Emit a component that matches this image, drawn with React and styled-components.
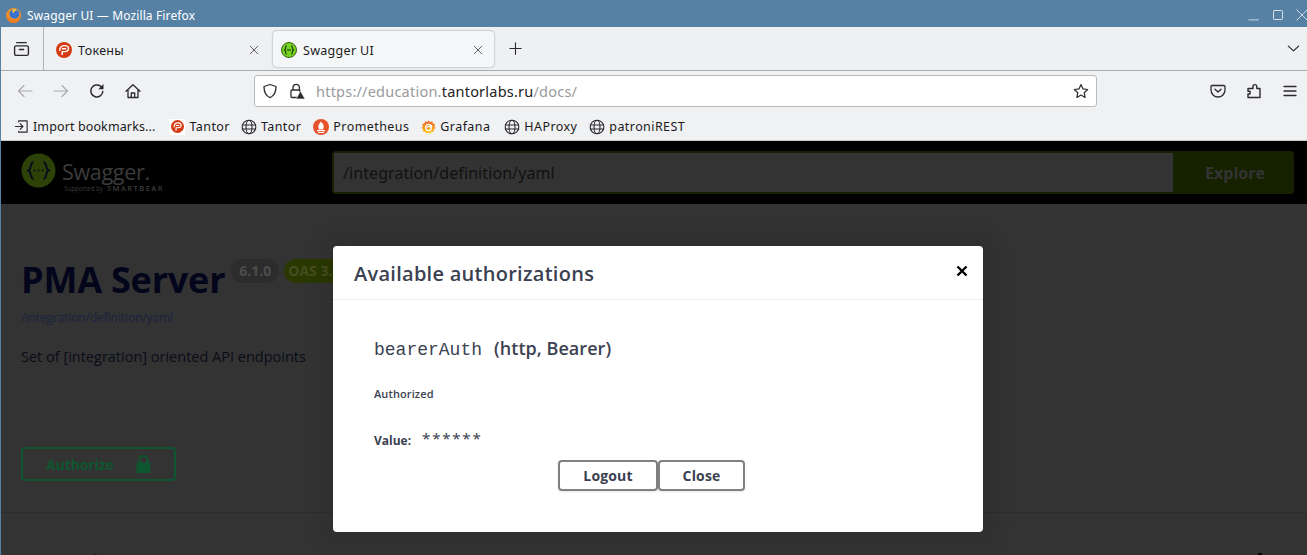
import React from 'react';
import styled, { createGlobalStyle } from 'styled-components';

const Global = createGlobalStyle`
  html, body { margin: 0; padding: 0; width: 1307px; height: 555px; overflow: hidden; background: #5681a5; }
  #root { width: 1307px; height: 555px; overflow: hidden; }
  * { box-sizing: border-box; }
`;

const Window = styled.div`
  width: 1307px; height: 555px; display: flex; flex-direction: column; overflow: hidden;
  font-family: "Noto Sans", sans-serif; background: #5681a5; padding-left: 1px;
`;
const TitleBar = styled.div`
  height: 27px; flex: none; display: flex; align-items: center; padding: 3px 0 0 5px; gap: 5px;
  color: #fff; font-size: 12px; margin-left: -1px; background: #5681a5;
`;
const TitleText = styled.span`flex: 1; letter-spacing: .13px;`;
const WinButtons = styled.div`display: flex; gap: 12px; align-items: center; margin-right: -1px;`;
const TabBar = styled.div`
  height: 44px; flex: none; display: flex; align-items: stretch; background: #eff0f2;
  border-bottom: 1px solid #a8a9ab; color: #1b1b1d;
`;
const TabLead = styled.div`
  width: 43px; display: flex; align-items: center; justify-content: center; border-right: 1px solid #b0b1b3; padding-right: 1px;
`;
const Tab = styled.div`
  width: ${p => p.$w}px; height: 36px; align-self: center; margin-top: 1px; padding-top: 2px; display: flex; align-items: center;
  padding-left: ${p => p.$active ? 8 : 12}px; padding-right: ${p => p.$active ? 10 : 13}px; gap: 6px; font-size: 12.5px;
  ${p => p.$active && 'background:#f5f6f7;border-radius:4px;box-shadow:0 0 2px rgba(0,0,0,.45);'}
`;
const TabLabel = styled.span`flex: 1; letter-spacing: .3px;`;
const NewTab = styled.div`width: 43px; display: flex; align-items: center; justify-content: center;`;
const TabSpacer = styled.div`flex: 1;`;
const TabMenu = styled.div`width: 28px; display: flex; align-items: center; justify-content: center;`;
const NavBar = styled.div`
  height: 40px; flex: none; display: flex; align-items: center; background: #f0f1f3; padding-left: 16px;
`;
const NavIcons = styled.div`display: flex; gap: 20px; align-items: center; width: 238px;`;
const UrlBox = styled.div`
  width: 843px; height: 32px; background: #fff; border: 1px solid #b9babb; border-radius: 3px;
  display: flex; align-items: center; padding: 0 7px; gap: 7px; font-size: 14.5px; color: #9a9a9c;
  margin-left: -1px;
`;
const LockWrap = styled.span`display: flex; margin-left: 4px;`;
const UrlText = styled.div`flex: 1; padding-left: 4px; letter-spacing: .22px; white-space: pre;`;
const Host = styled.span`color: #222;`;
const NavRight = styled.div`display: flex; margin-left: 113px; gap: 20px; align-items: center;`;
const Bookmarks = styled.div`
  height: 30px; flex: none; display: flex; align-items: center; background: #f0f1f3; padding: 2px 0 0 13px;
  font-size: 12.5px; color: #1a1a1c;
  border-bottom: 1px solid #c8c8c8;
`;
const Bookmark = styled.div`display: flex; align-items: center; gap: 4px; margin-right: ${p => p.$mr ?? 12}px; letter-spacing: ${p => p.$ls ?? .42}px; white-space: nowrap;`;
const FaviconBox = styled.span`width: 16px; height: 16px; background: #fff; display: flex; align-items: center; justify-content: center;`;
const Page = styled.div`flex: 1; position: relative; background: #333; font-family: "Open Sans", sans-serif; overflow: hidden;`;
const Header = styled.div`
  height: 63px; background: #000; display: flex; align-items: center; padding-left: 20px;
`;
const Logo = styled.div`width: 311px; display: flex; gap: 6px; align-items: center;`;
const LogoMark = styled.svg`margin-top: -4px; flex: none;`;
const LogoText = styled.div`display: flex; flex-direction: column; color: #3c3c3c; margin-top: 7px;`;
const LogoName = styled.div`font-size: 21.5px; line-height: 24px; letter-spacing: -.3px; font-weight: 400;`;
const LogoSub = styled.div`font-size: 6.2px; line-height: 8px; display: flex; gap: 4px; align-items: baseline; white-space: nowrap; padding-left: 2px;`;
const LogoBear = styled.span`font-size: 7.5px; letter-spacing: 1.45px; font-weight: 600;`;
const Explore = styled.div`
  width: 962px; height: 43px; display: flex; border: 2px solid #162100; border-radius: 4px; background: #162100;
`;
const ExploreInput = styled.div`
  width: 839px; background: #333; color: #111; font-size: 16px; letter-spacing: .08px; display: flex; align-items: center; padding-left: 9px; font-family: "Noto Sans", sans-serif;
`;
const ExploreBtn = styled.div`
  flex: 1; color: #333; font-weight: 700; font-size: 16px; display: flex; align-items: center; justify-content: center; padding-left: 5px;
`;
const Info = styled.div`padding: 52px 0 0 20px;`;
const TitleRow = styled.div`display: flex; align-items: flex-start; gap: 6px;`;
const H1 = styled.div`color: #03051a; font-size: 36px; font-weight: 700; line-height: 48px; letter-spacing: -.2px;`;
const Badge = styled.div`
  height: 24px; border-radius: 12px; padding: 0 ${p => p.$pad}px; font-size: 14px; font-weight: 700; line-height: 24px;
  color: ${p => p.$c}; background: ${p => p.$bg}; margin-top: 3px; white-space: nowrap;
`;
const Badges = styled.div`display: flex; gap: 5px;`;
const BaseUrl = styled.div`font-size: 12px; color: #1a2240; line-height: 16px; margin-top: 6px; letter-spacing: -.1px;`;
const Desc = styled.div`font-size: 14.5px; color: #0a0c18; line-height: 20px; margin-top: 21px;`;
const AuthWrap = styled.div`padding: 80px 0 0 20px;`;
const AuthBtn = styled.div`
  width: 155px; height: 34px; border: 2px solid #0d5630; border-radius: 4px; display: flex; align-items: center;
  padding-left: 23px; gap: 22px; color: #0d5630; font-weight: 700; font-size: 14px; letter-spacing: -.1px;
`;
const Divider = styled.div`height: 1px; background: #2d2d2d; margin-top: 31px;`;
const Section = styled.div`
  padding: 33px 37px 0 34px; color: #03051a; font-size: 23px; font-weight: 700; line-height: 30px;
  display: flex; justify-content: space-between; align-items: flex-start;
`;
const Chevron = styled.svg`margin-top: 7px;`;
const Modal = styled.div`
  position: absolute; left: 332px; top: 105px; width: 650px; height: 286px; background: #fff; border-radius: 4px;
  box-shadow: 0 0 20px 10px rgba(20,20,20,.1); display: flex; flex-direction: column; color: #3b4151;
`;
const ModalHead = styled.div`
  height: 54px; flex: none; border-bottom: 1px solid #ebebeb; display: flex; align-items: center; padding: 0 11px 0 21px;
`;
const ModalTitle = styled.div`flex: 1; font-size: 20px; font-weight: 600; letter-spacing: .27px; margin-top: 1px;`;
const CloseX = styled.svg`margin-top: -3px;`;
const ModalBody = styled.div`padding: 36px 54px 0 41px; display: flex; flex-direction: column;`;
const Scheme = styled.div`display: flex; align-items: baseline; font-size: 18px; font-weight: 600; line-height: 24px; gap: 12px; letter-spacing: .05px;`;
const Mono = styled.span`font-family: "Liberation Mono", monospace; font-weight: 400; font-size: 18px; letter-spacing: 0;`;
const Small = styled.div`font-size: 11px; font-weight: 600; line-height: 14px; margin-top: 25px; letter-spacing: .1px;`;
const ValueRow = styled.div`display: flex; align-items: flex-start; font-size: 12px; font-weight: 700; margin-top: 32px; height: 20px; line-height: 16px; gap: 11px;`;
const Mask = styled.span`font-family: "Noto Sans", sans-serif; font-weight: 400; font-size: 15px; letter-spacing: 1.8px; margin-top: -5px; line-height: 20px;`;
const Actions = styled.div`display: flex; justify-content: center; margin-top: 7px;`;
const ModalBtn = styled.div`
  width: ${p => p.$w}px; height: 31px; border: 2px solid #808080; border-radius: 4px; display: flex; align-items: center; justify-content: center;
  font-size: 14px; font-weight: 700; color: #3b4151; box-shadow: 0 1px 2px rgba(0,0,0,.1); letter-spacing: .15px;
`;

const I = ({ s = 16, c = '#2b2b2f', w = 1.3, children }) => (
  <svg width={s} height={s} viewBox="0 0 16 16" fill="none" stroke={c} strokeWidth={w} strokeLinecap="round" strokeLinejoin="round">{children}</svg>
);
const Globe = () => (
  <I s={16} w={1.1}>
    <circle cx="8" cy="8" r="6.8" />
    <ellipse cx="8" cy="8" rx="3" ry="6.8" />
    <path d="M1.2 6h13.6M1.2 10h13.6" />
  </I>
);
const TantorMark = ({ s = 16 }) => (
  <svg width={s} height={s} viewBox="0 0 16 16">
    <circle cx="8" cy="8" r="8" fill="#d63a12" />
    <path d="M3.800 8.400C3.800 5.400 5.900 3.600 8.700 3.600c2.300 0 3.800 1.300 3.800 3 0 1.900-1.600 3-3.700 3H6.300M6.400 6.700h3.300M6.200 9.600v3" fill="none" stroke="#fff" strokeWidth="1.4" strokeLinecap="round" />
  </svg>
);
const SwaggerMark = () => (
  <svg width="16" height="16" viewBox="0 0 16 16">
    <circle cx="8" cy="8" r="7.500" fill="#74d420" stroke="#3d5f1a" strokeWidth="1" />
    <path d="M5.600 3.600C4 4 5.400 7 3.600 8c1.800 1 .4 4 2 4.400M10.400 3.600c1.600.4.2 3.400 2 4.400-1.800 1-.4 4-2 4.400M6 8h4" fill="none" stroke="#1f2d12" strokeWidth="1.100" />
  </svg>
);
const Firefox = () => (
  <svg width="17" height="17" viewBox="0 0 17 17">
    <circle cx="8.500" cy="8.500" r="7.500" fill="#f0912a" />
    <circle cx="9.400" cy="6.900" r="4.900" fill="#3a72cf" />
    <path d="M1.500 5.500c.6 5.400 5 8.700 9.500 7.500 2.200-.6 3.900-2.400 4.500-4.800.6 3.800-2.600 7.900-7 7.900C4.200 16.100.9 12 1.500 5.500z" fill="#ec7a22" />
    <path d="M7 2.800c2.200-1.300 4.300-.8 5.500.8-1.300-.4-2.100-.2-2.500.5L8 6.500z" fill="#f7c53c" />
  </svg>
);

export default function App() {
  return (
    <Window>
      <Global />
      <TitleBar>
        <Firefox />
        <TitleText>Swagger UI — Mozilla Firefox</TitleText>
        <WinButtons>
          <I s={12} c="#e9eef3" w={1}><path d="M1 14.500h13" /></I>
          <I s={12} c="#e9eef3" w={1.200}><rect x="2" y="2" width="12" height="12" rx="1.200" /></I>
          <I s={12} c="#e9eef3" w={1.100}><path d="M1 1l14 14M15 1L1 15" /></I>
        </WinButtons>
      </TitleBar>
      <TabBar>
        <TabLead>
          <I s={17}><rect x="1.500" y="5.500" width="13" height="9" rx="1.500" /><path d="M3.500 2.500h9M6 9h4" /></I>
        </TabLead>
        <Tab $w={229}>
          <TantorMark />
          <TabLabel>Токены</TabLabel>
          <I s={12} w={1}><path d="M3 3l10 10M13 3L3 13" /></I>
        </Tab>
        <Tab $w={221} $active>
          <SwaggerMark />
          <TabLabel>Swagger UI</TabLabel>
          <I s={12} w={1}><path d="M3 3l10 10M13 3L3 13" /></I>
        </Tab>
        <NewTab><I s={15} w={1.200}><path d="M8 2v12M2 8h12" /></I></NewTab>
        <TabSpacer />
        <TabMenu><I s={15} w={1.300}><path d="M2.500 5.500L8 10.500l5.500-5" /></I></TabMenu>
      </TabBar>
      <NavBar>
        <NavIcons>
          <I c="#a8a9ac" w={1.100}><path d="M15 8H1.500M7 2.500L1.500 8 7 13.500" /></I>
          <I c="#a8a9ac" w={1.100}><path d="M1 8h13.500M9 2.500L14.500 8 9 13.500" /></I>
          <svg width="16" height="16" viewBox="0 0 16 16" fill="none">
            <path d="M13.800 8.500A6 6 0 1 1 11.500 3.200" stroke="#2b2b2f" strokeWidth="1.500" strokeLinecap="round" />
            <path d="M14.500 1v5.200H9.300z" fill="#2b2b2f" />
          </svg>
          <I w={1.300}><path d="M1 8.300L8 1.800l7 6.500M3 6.800v7.700h10V6.800M6.300 14.500V10h3.400v4.500" /></I>
        </NavIcons>
        <UrlBox>
          <I w={1.300}><path d="M8 1.500l6 2c0 6-1.500 9.200-6 11.200-4.500-2-6-5.200-6-11.200z" /></I>
          <LockWrap>
            <svg width="16" height="16" viewBox="0 0 16 16" fill="none">
              <path d="M4 7V4.500a3.200 3.200 0 0 1 6.400 0V7" stroke="#2b2b2f" strokeWidth="1.300" />
              <rect x="2" y="7" width="9" height="7.500" rx="1" stroke="#2b2b2f" strokeWidth="1.300" fill="#fff" />
              <path d="M11.500 8l4.500 8H7z" fill="#2b2b2f" stroke="#fff" strokeWidth=".6" />
            </svg>
          </LockWrap>
          <UrlText>https://education.<Host>tantorlabs.ru</Host>/docs/</UrlText>
          <I w={1.200}><path d="M8 1.600l2 4.300 4.700.6-3.500 3.200.9 4.700L8 12.100l-4.100 2.300.9-4.700L1.300 6.500 6 5.900z" /></I>
        </UrlBox>
        <NavRight>
          <I w={1.300}><path d="M2 2.500h12a1 1 0 0 1 1 1V7a7 7 0 0 1-14 0V3.500a1 1 0 0 1 1-1z" /><path d="M5 6.200L8 9l3-2.800" /></I>
          <I w={1.400}><path d="M2 14.500H14V5.500H10.800V3.500A1.900 1.900 0 0 0 7 3.500V5.500H2V8.200H4V11H2Z" /></I>
          <I w={1.300}><path d="M2 3.500h12M2 8h12M2 12.500h12" /></I>
        </NavRight>
      </NavBar>
      <Bookmarks>
        <Bookmark $mr={14} $ls={.12}><I s={15} w={1.200}><path d="M1.500 8h7.500M6.500 5l3 3-3 3M5 3V2h9v12H5v-1" /></I>Import bookmarks...</Bookmark>
        <Bookmark $mr={11}><FaviconBox><TantorMark s={13} /></FaviconBox>Tantor</Bookmark>
        <Bookmark><Globe />Tantor</Bookmark>
        <Bookmark>
          <svg width="16" height="16" viewBox="0 0 16 16">
            <circle cx="8" cy="8" r="8" fill="#e6522c" />
            <path d="M4 11h8v1.200H4zM5 13h6v1H5zM8 2.500c1 1.800 3 2.600 2.700 5.500L10 10.500H6L5.300 8C5 5.600 7 4.500 8 2.500z" fill="#fff" />
          </svg>Prometheus</Bookmark>
        <Bookmark $mr={14}>
          <svg width="15" height="16" viewBox="0 0 16 16">
            <defs><linearGradient id="gf" x1="0" y1="1" x2="0" y2="0"><stop offset="0" stopColor="#fbca0a" /><stop offset="1" stopColor="#f05a28" /></linearGradient></defs>
            <path d="M8 .8l1.600 2 2.400-1 .6 2.500 2.500.6-.9 2.400L15.600 9l-2 1.400.1 2.600-2.600.1L9.600 15.300 8 13.800 6 15.300l-1.200-2.200-2.600-.1.1-2.600L.4 9l1.700-1.700-.9-2.400 2.500-.6.6-2.500 2.400 1z" fill="url(#gf)" />
            <path d="M11.500 8.500a3.300 3.300 0 1 0-2.900 3.300A2.200 2.200 0 1 0 6.600 8.600" fill="none" stroke="#fff" strokeWidth="1.500" />
          </svg>Grafana</Bookmark>
        <Bookmark><Globe />HAProxy</Bookmark>
        <Bookmark><Globe />patroniREST</Bookmark>
      </Bookmarks>
      <Page>
        <Header>
          <Logo>
            <LogoMark width="35" height="35" viewBox="0 0 35 35">
              <circle cx="17.500" cy="17.500" r="17" fill="#2c4206" />
              <path d="M12.500 9c-4 .5-1.500 7-5 8.500 3.500 1.500 1 8 5 8.500M22.500 9c4 .5 1.500 7 5 8.500-3.500 1.500-1 8-5 8.500" fill="none" stroke="#070d1c" strokeWidth="2" />
              <circle cx="13.500" cy="17.500" r="1" fill="#070d1c" /><circle cx="17.500" cy="17.500" r="1" fill="#070d1c" /><circle cx="21.500" cy="17.500" r="1" fill="#070d1c" />
            </LogoMark>
            <LogoText>
              <LogoName>Swagger.</LogoName>
              <LogoSub>Supported by <LogoBear>SMARTBEAR</LogoBear></LogoSub>
            </LogoText>
          </Logo>
          <Explore>
            <ExploreInput>/integration/definition/yaml</ExploreInput>
            <ExploreBtn>Explore</ExploreBtn>
          </Explore>
        </Header>
        <Info>
          <TitleRow>
            <H1>PMA Server</H1>
            <Badges>
              <Badge $bg="#2c2c2c" $c="#4c4c4c" $pad={8}>6.1.0</Badge>
              <Badge $bg="#2a3800" $c="#454d20" $pad={4}>OAS 3.0</Badge>
            </Badges>
          </TitleRow>
          <BaseUrl>/integration/definition/yaml</BaseUrl>
          <Desc>Set of [integration] oriented API endpoints</Desc>
        </Info>
        <AuthWrap>
          <AuthBtn>Authorize
            <svg width="15" height="18" viewBox="0 0 15 18">
              <path d="M3.500 8V5a4 4 0 0 1 8 0v3" fill="none" stroke="#0d5630" strokeWidth="2" />
              <rect x=".5" y="7.500" width="14" height="10.500" rx="1" fill="#0d5630" />
            </svg>
          </AuthBtn>
        </AuthWrap>
        <Divider />
        <Section>
          events
          <Chevron width="20" height="20" viewBox="0 0 20 20"><path d="M3 12L10 0l7 12" fill="none" stroke="#000" strokeWidth="2" /></Chevron>
        </Section>
        <Modal>
          <ModalHead>
            <ModalTitle>Available authorizations</ModalTitle>
            <CloseX width="20" height="20" viewBox="0 0 20 20"><path d="M5.500 5.500l9 9M14.500 5.500l-9 9" stroke="#000" strokeWidth="2.400" /></CloseX>
          </ModalHead>
          <ModalBody>
            <Scheme><Mono>bearerAuth</Mono><span>(http, Bearer)</span></Scheme>
            <Small>Authorized</Small>
            <ValueRow><span>Value:</span><Mask>******</Mask></ValueRow>
            <Actions>
              <ModalBtn $w={100}>Logout</ModalBtn>
              <ModalBtn $w={87}>Close</ModalBtn>
            </Actions>
          </ModalBody>
        </Modal>
      </Page>
    </Window>
  );
}
